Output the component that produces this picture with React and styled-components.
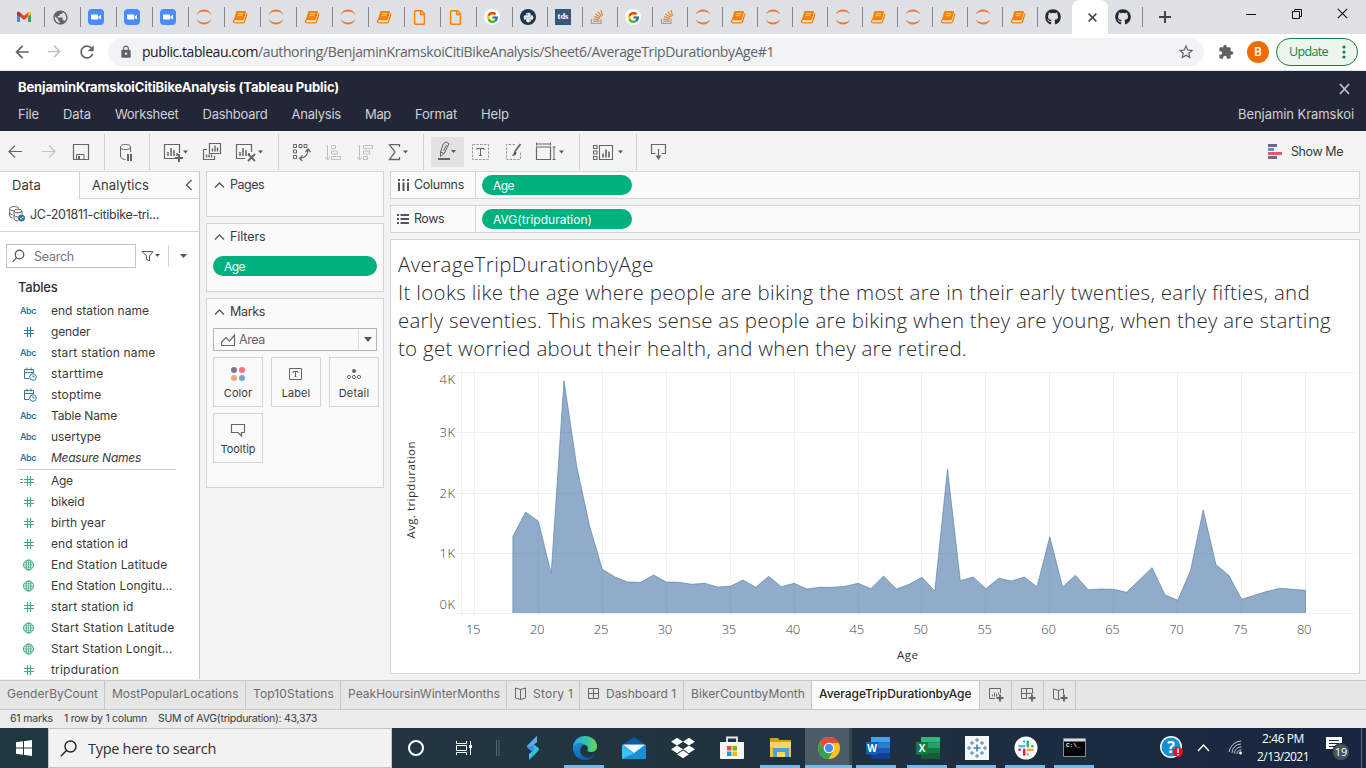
import React, { useLayoutEffect, useRef, useState } from "react";
import styled, { createGlobalStyle, css } from "styled-components";
import { FcGoogle } from "react-icons/fc";
import { FaGithub, FaPython, FaRegFile, FaDropbox } from "react-icons/fa";
import { MdPublic, MdArrowBack, MdArrowForward, MdRefresh, MdLock, MdStarBorder, MdExtension } from "react-icons/md";

const UI = `Inter, "Liberation Sans", sans-serif`;
const SYS = `"Open Sans", "Noto Sans", sans-serif`;

const GlobalStyle = createGlobalStyle`
  * { box-sizing: border-box; }
  body { margin: 0; overflow: hidden; background: #f3f3f3; font-family: ${UI}; color: #3a3a3a; }
  svg { display: block; flex: none; }
`;

const Screen = styled.div`
  width: 1366px;
  height: 768px;
  display: flex;
  flex-direction: column;
  overflow: hidden;
`;

/* ---------- text that tracks itself to a given width ---------- */
const Label = styled.span`
  display: inline-block;
  white-space: pre;
  flex: none;
`;
function Fit({ w, children }) {
  const ref = useRef(null);
  const [tracking, setTracking] = useState(0);
  useLayoutEffect(() => {
    const natural = ref.current.getBoundingClientRect().width;
    setTracking((w - natural) / children.length);
  }, [w, children]);
  return (
    <Label ref={ref} style={{ letterSpacing: tracking }}>
      {children}
    </Label>
  );
}

/* ---------- browser chrome ---------- */
const TabStrip = styled.div`
  height: 34px;
  flex: none;
  background: #dee1e6;
  display: flex;
  padding-left: 9px;
`;
const BrowserTab = styled.div`
  width: ${(p) => p.$w}px;
  height: 34px;
  flex: none;
  display: flex;
  align-items: center;
  padding-left: 7px;
  background: ${(p) => (p.$line ? "linear-gradient(#85888d, #85888d) right 7px / 1px 20px no-repeat" : "none")};
`;
const ActiveTab = styled.div`
  width: 36px;
  margin: 0 0 0 -1px;
  flex: none;
  height: 34px;
  background: #fff;
  border-radius: 8px 8px 0 0;
  display: flex;
  align-items: center;
  justify-content: center;
  padding-left: 4px;
`;
const WindowButtons = styled.div`
  display: flex;
  align-items: flex-start;
  margin-left: 66px;
  padding-top: 8px;
  gap: 34px;
`;
const Tile = styled.div`
  width: 16px;
  height: 16px;
  background: #355876;
  color: #fff;
  font: bold 8.5px/14px "Liberation Serif", serif;
  text-align: center;
`;
const GoogleDisc = styled.div`
  width: 16px;
  height: 16px;
  border-radius: 50%;
  background: #fff;
  display: grid;
  place-items: center;
`;
const PythonDisc = styled(GoogleDisc)`
  background: #1c3448;
  color: #e8eef2;
`;
const NavBar = styled.div`
  height: 37px;
  flex: none;
  background: #fff;
  border-bottom: 1px solid #dfe3e2;
  display: flex;
  align-items: center;
  color: #5f6368;
  font-family: ${SYS};
`;
const NavIcons = styled.div`
  display: flex;
  gap: 13px;
  width: 108px;
  padding-left: 12px;
`;
const Address = styled.div`
  width: 1096px;
  height: 28px;
  margin-right: 14px;
  border-radius: 14px;
  background: #f1f3f4;
  display: flex;
  align-items: center;
  padding: 0 9px 1px 11px;
  font-size: 14px;
  color: #5f6368;
  & > svg:first-child { margin-right: 9px; }
  & > svg:last-child { margin-left: auto; }
`;
const Host = styled.span`
  color: #202124;
  display: flex;
`;
const Avatar = styled.div`
  width: 22px;
  height: 22px;
  border-radius: 50%;
  background: #ef6c00;
  color: #fff;
  font: 500 12px/22px Roboto, sans-serif;
  text-align: center;
  margin: 0 7px 0 13px;
`;
const UpdateButton = styled.div`
  width: 82px;
  height: 28px;
  border: 1px solid #188038;
  border-radius: 14px;
  background: #edf5ef;
  color: #188038;
  font-size: 12.5px;
  display: flex;
  align-items: center;
  justify-content: space-between;
  padding: 0 11px 1px 12px;
`;

/* ---------- Tableau header ---------- */
const Header = styled.header`
  height: 60px;
  flex: none;
  background: #232637;
  color: #d0d1d6;
  padding: 7px 12px 0 18px;
`;
const HeaderRow = styled.div`
  display: flex;
  justify-content: space-between;
  align-items: center;
  height: ${(p) => p.$h}px;
`;
const CloseIcon = styled.svg`
  margin-top: 2px;
`;
const DocTitle = styled.div`
  color: #fff;
  font-weight: 700;
  font-size: 13px;
`;
const Menu = styled.nav`
  display: flex;
  gap: 24px;
  font-size: 13px;
`;
const Toolbar = styled.div`
  height: 40px;
  flex: none;
  background: #f4f4f4;
  display: flex;
  padding-top: 3px;
`;
const ToolGroup = styled.div`
  width: ${(p) => p.$w}px;
  height: 36px;
  flex: none;
  display: flex;
  align-items: center;
  gap: ${(p) => p.$gap ?? 8}px;
  padding-left: ${(p) => p.$pl}px;
  border-right: 1px solid ${(p) => (p.$last ? "transparent" : "#d1d1d1")};
`;
const ActiveTool = styled.div`
  width: 33px;
  height: 30px;
  background: #e2e2e2;
  display: flex;
  align-items: center;
`;
const ShowMe = styled.div`
  margin-left: auto;
  display: flex;
  align-items: center;
  gap: 8px;
  padding: 0 23px 2px 0;
  font-size: 12.5px;
`;

/* ---------- workspace ---------- */
const Workspace = styled.main`
  height: 509px;
  flex: none;
  display: flex;
  background: #f3f3f3;
`;
const DataPane = styled.aside`
  width: 200px;
  height: 508px;
  flex: none;
  background: #fff;
  border-right: 1px solid #c8c8c8;
  overflow: hidden;
`;
const PaneTabs = styled.div`
  height: 28px;
  display: flex;
  border-top: 1px solid #d4d4d4;
  font-size: 13px;
`;
const PaneTab = styled.div`
  width: ${(p) => p.$w}px;
  padding: 0 0 1px 12px;
  display: flex;
  align-items: center;
  justify-content: space-between;
  ${(p) =>
    p.$idle &&
    css`
      background: #fafafa;
      border-left: 1px solid #d4d4d4;
      border-bottom: 1px solid #d4d4d4;
      padding: 0 6px 0 12px;
    `}
`;
const Source = styled.div`
  height: 33px;
  border-bottom: 1px solid #d4d4d4;
  display: flex;
  align-items: center;
  gap: 4px;
  padding: 0 0 2px 9px;
  font-size: 12.5px;
`;
const SearchRow = styled.div`
  display: flex;
  align-items: center;
  height: 24px;
  margin: 12px 0 0 6px;
`;
const SearchBox = styled.div`
  width: 130px;
  height: 24px;
  border: 1px solid #c4c4c4;
  display: flex;
  align-items: center;
  gap: 9px;
  padding-left: 5px;
  color: #757575;
  font-size: 12.5px;
`;
const SearchDivider = styled.div`
  width: 1px;
  height: 22px;
  background: #d4d4d4;
  margin: 0 11px 0 8px;
`;
const TablesTitle = styled.div`
  margin: 9px 0 2px 18px;
  font-size: 13px;
  font-weight: 500;
  line-height: 21px;
  color: #303030;
`;
const Field = styled.div`
  height: 21px;
  display: flex;
  align-items: center;
  font-size: 12px;
  font-style: ${(p) => (p.$italic ? "italic" : "normal")};
`;
const FieldKind = styled.div`
  width: 51px;
  padding-left: 20px;
  flex: none;
  color: ${(p) => (p.$measure ? "#4aa583" : "#34799a")};
  font: 600 9px/21px ${UI};
  display: flex;
  align-items: center;
  height: 21px;
`;
const FieldRule = styled.div`
  height: 1px;
  width: 158px;
  margin: 1px 0 0 18px;
  background: #cfcfcf;
`;

const Cards = styled.section`
  width: 178px;
  margin-left: 6px;
  flex: none;
  display: flex;
  flex-direction: column;
  gap: 6px;
`;
const Card = styled.div`
  height: ${(p) => p.$h}px;
  background: #fafafa;
  border: 1px solid #d4d4d4;
  padding: 0 6px;
`;
const CardTitle = styled.div`
  height: 26px;
  display: flex;
  align-items: center;
  gap: 5px;
  padding: 0 0 1px 1px;
  font-size: 12.5px;
`;
const Pill = styled.div`
  width: ${(p) => p.$w}px;
  height: 20px;
  border-radius: 10px;
  background: #00b180;
  color: #fff;
  font-size: 12px;
  line-height: 21px;
  padding-left: 11px;
  margin-top: ${(p) => p.$mt ?? 0}px;
`;
const MarkSelect = styled.div`
  height: 23px;
  margin-top: 3px;
  border: 1px solid #b4b4b4;
  display: flex;
  align-items: center;
  padding-left: 7px;
  gap: 3px;
  font-size: 12.5px;
  color: #666;
  background: #fafafa;
`;
const SelectArrow = styled.div`
  width: 18px;
  height: 21px;
  margin-left: auto;
  border-left: 1px solid #ddd;
  display: grid;
  place-items: center;
`;
const MarkGrid = styled.div`
  display: grid;
  grid-template-columns: repeat(3, 50px);
  grid-auto-rows: 50px;
  gap: 6px 8px;
  margin-top: 6px;
`;
const MarkButton = styled.div`
  border: 1px solid #d4d4d4;
  background: #fafafa;
  display: flex;
  flex-direction: column;
  align-items: center;
  padding-top: 8px;
  font-size: 11px;
  line-height: 21px;
`;

const Sheet = styled.section`
  width: 970px;
  margin-left: 6px;
  flex: none;
  display: flex;
  flex-direction: column;
  gap: 6px;
`;
const Shelf = styled.div`
  height: 28px;
  background: #fafafa;
  border: 1px solid #d4d4d4;
  display: flex;
  align-items: center;
`;
const ShelfName = styled.div`
  width: 85px;
  height: 26px;
  border-right: 1px solid #d4d4d4;
  margin-right: 6px;
  padding: 0 0 1px 6px;
  display: flex;
  align-items: center;
  gap: 4px;
  font-size: 12.5px;
`;
const View = styled.div`
  height: 435px;
  background: #fff;
  border: 1px solid #d4d4d4;
`;
const ViewTitle = styled.div`
  height: 124px;
  padding: 10px 0 0 7px;
  font: 300 20.500px/28px ${SYS};
  color: #2c2c2c;
  display: flex;
  flex-direction: column;
  align-items: flex-start;
`;

/* ---------- sheet tabs and status ---------- */
const SheetTabs = styled.div`
  height: 30px;
  flex: none;
  background: #e6e6e6;
  border-top: 1px solid #c8c8c8;
  border-bottom: 1px solid #c8c8c8;
  display: flex;
`;
const SheetTab = styled.div`
  width: ${(p) => p.$w}px;
  flex: none;
  border-right: 1px solid #c8c8c8;
  padding: 0 0 ${(p) => (p.$add ? 1 : 3)}px ${(p) => (p.$add ? 8 : 7)}px;
  display: flex;
  align-items: center;
  gap: 5px;
  font-size: 12px;
  color: ${(p) => (p.$active ? "#262626" : "#6c6c6c")};
  font-weight: ${(p) => (p.$active ? 500 : 400)};
  background: ${(p) => (p.$active ? "#fafafa" : "none")};
`;
const Status = styled.div`
  height: 18px;
  flex: none;
  background: #ebebeb;
  display: flex;
  gap: 11px;
  padding-left: 10px;
  font-size: 10.5px;
  line-height: 18px;
`;

/* ---------- taskbar ---------- */
const Taskbar = styled.footer`
  height: 40px;
  flex: none;
  background: linear-gradient(90deg, #203740 0%, #21353f 45%, #1c2d41 75%, #182640 100%);
  display: flex;
  color: #fff;
  font-family: ${SYS};
`;
const Start = styled.div`
  width: 48px;
  display: grid;
  place-items: center;
`;
const TaskSearch = styled.div`
  width: 344px;
  height: 40px;
  background: #f2f2f2;
  border: 1px solid #c6c6c6;
  color: #303030;
  display: flex;
  align-items: center;
  gap: 11px;
  padding-left: 11px;
  font-size: 14.5px;
`;
const TaskItem = styled.div`
  width: ${(p) => p.$w ?? 49}px;
  height: 40px;
  flex: none;
  display: flex;
  align-items: center;
  justify-content: center;
  border-bottom: 3px solid transparent;
  border-top: 3px solid transparent;
  ${(p) =>
    p.$open &&
    css`
      background: linear-gradient(#76b9ed, #76b9ed) ${p.$active ? "0" : "4px"} 100% /
        ${p.$active ? "47px" : "40px"} 3px no-repeat border-box,
        ${p.$active ? "linear-gradient(90deg, #4b5c66 44px, #34464f 44px) border-box" : "none"};
    `}
`;
const Tray = styled.div`
  margin-left: auto;
  display: flex;
  align-items: center;
`;
const Clock = styled.div`
  width: 60px;
  margin-right: 8px;
  font-size: 12px;
  line-height: 18px;
  display: flex;
  flex-direction: column;
  align-items: center;
`;
const PeekEdge = styled.div`
  width: 5px;
  height: 40px;
  margin-left: 6px;
  border-left: 1px solid #5c6878;
`;

/* ---------- favicons ---------- */
const Gmail = () => (
  <svg width="16" height="16" viewBox="0 0 16 16">
    <path d="M1 4.2V13h3V7.6L1 5z" fill="#4285f4" />
    <path d="M12 7.6V13h3V4.2z" fill="#34a853" />
    <path d="M12 4.2v3.6l3-2.3V4.4c0-1.8-1.7-2-2.6-1.2z" fill="#fbbc04" />
    <path d="M4 7.8 8 10.9 12 7.8V3.6L8 6.7 4 3.6z" fill="#ea4335" />
    <path d="M1 4.4v1.1l3 2.3V3.6l-.5-.4C2.5 2.5 1 2.8 1 4.4z" fill="#c5221f" />
  </svg>
);
const Zoom = () => (
  <svg width="16" height="16" viewBox="0 0 16 16">
    <rect width="16" height="16" rx="4" fill="#4a8cff" />
    <path d="M3 5.5h6.2q1 0 1 1v4H4q-1 0-1-1zM10.800 7.3 13 5.7v4.8l-2.2-1.6z" fill="#fff" />
  </svg>
);
const Jupyter = () => (
  <svg width="16" height="16" viewBox="0 0 16 16" fill="#f37726">
    <path d="M.6 5.6C2 2.2 5 .6 8 .6s6 1.6 7.4 5C13.5 3.6 11 2.6 8 2.6S2.5 3.6.6 5.6z" />
    <path d="M.6 10.4c1.4 3.4 4.4 5 7.4 5s6-1.6 7.4-5c-1.9 2-4.400 3-7.4 3s-5.500-1-7.4-3z" />
  </svg>
);
const Notebook = () => (
  <svg width="16" height="16" viewBox="0 0 16 16">
    <path d="M5.200 2h7.800q1.200 0 .9 1.200L11.900 10.300q-.3.900-1.300.9H1.900L4 3q.3-1 1.200-1z" fill="#f98000" />
    <path d="M1.700 11q-.9 2.800 1.300 2.800h8q1.200 0 1.500-1L15 4.600" fill="none" stroke="#f98000" strokeWidth="1.300" />
    <path d="M6.300 4.700h5M5.700 6.700h5" stroke="#fde0bd" strokeWidth=".9" />
  </svg>
);
const StackOverflow = () => (
  <svg width="16" height="16" viewBox="0 0 16 16" fill="none">
    <path d="M1.500 10v4.500h9.500V10" stroke="#999fa5" strokeWidth="1.200" />
    <path d="M3.200 12.400h6.200M3.300 10.100l6.100.7M4 7.600l5.900 1.800M5.400 5l5.200 3.200M7.800 2.600l3.900 4.700M10.900 1l1.700 5.600" stroke="#f48024" strokeWidth="1.100" />
  </svg>
);
const GoogleIcon = () => (
  <GoogleDisc>
    <FcGoogle size={13} />
  </GoogleDisc>
);
const favicons = {
  gmail: <Gmail />,
  globe: <MdPublic size={17} color="#5f6368" />,
  zoom: <Zoom />,
  jup: <Jupyter />,
  book: <Notebook />,
  page: <FaRegFile size={15} color="#f98000" />,
  google: <GoogleIcon />,
  python: (
    <PythonDisc>
      <FaPython size={11} />
    </PythonDisc>
  ),
  tds: <Tile>tds</Tile>,
  so: <StackOverflow />,
  git: <FaGithub size={16} color="#24292e" />,
};
const wideTabs = ["gmail", "globe", "zoom", "zoom", "zoom", "jup", "book", "jup", "book", "jup", "book", "page", "page", "google"];
const narrowTabs = ["python", "tds", "so", "google", "so", "jup", "book", "jup", "book", "jup", "book", "jup", "book", "jup", "book"];

const Cross = ({ size = 10, color = "#444", width = 1.6 }) => (
  <svg width={size} height={size} viewBox="0 0 10 10">
    <path d="M.7.7 9.3 9.3M9.3.7.7 9.3" stroke={color} strokeWidth={width} />
  </svg>
);

/* ---------- toolbar drawings ---------- */
const Draw = ({ w = 24, h = 24, children, color = "#666" }) => (
  <svg width={w} height={h} viewBox={`0 0 ${w} ${h}`} fill="none" stroke={color} strokeWidth="1">
    {children}
  </svg>
);
const Caret = ({ x, y = 10.5 }) => <path d={`M${x} ${y}h5l-2.5 3z`} fill="#555" stroke="none" />;
const Bars = ({ x, y }) => <path d={`M${x} ${y}v-4M${x + 3} ${y}v-8M${x + 6} ${y}v-6M${x + 9} ${y}v-3`} strokeWidth="1.5" />;
const Down = () => (
  <svg width="8" height="5" viewBox="0 0 8 5">
    <path d="M0 0h8L4 5z" fill="#555" />
  </svg>
);

function Tools() {
  return (
    <Toolbar>
      <ToolGroup $w={105} $pl={4}>
        <Draw><path d="M18 11.500H5.500M11 5.500l-6 6 6 6" strokeWidth="1.200" /></Draw>
        <Draw color="#c4c4c4"><path d="M6 11.500h12.500M13 5.500l6 6-6 6" strokeWidth="1.200" /></Draw>
        <Draw w={26}>
          <path d="M5.500 4.500h15v15h-15z" strokeWidth="1.200" />
          <path d="M8.500 19.500v-5h7.500v5" />
          <path d="M10 16h2v3.500h-2z" fill="#666" stroke="none" />
        </Draw>
      </ToolGroup>
      <ToolGroup $w={45} $pl={11}>
        <Draw>
          <ellipse cx="9.500" cy="7" rx="5" ry="2.500" />
          <path d="M4.500 7v10q1 2.500 5 2.500M14.500 7v5" />
          <path d="M12 14v7M15 14v7" strokeWidth="2" />
        </Draw>
      </ToolGroup>
      <ToolGroup $w={129} $pl={10} $gap={7}>
        <Draw w={32}>
          <path d="M19.500 13V4.500h-15v14H15" strokeWidth="1.200" />
          <Bars x={8} y={16} />
          <path d="M19 14v8M15 18h8" strokeWidth="2" />
          <Caret x={23} />
        </Draw>
        <Draw>
          <path d="M10.500 3.500h11v10h-11z" strokeWidth="1.200" />
          <path d="M13.500 11.500v-3M16 11.500v-6M18.500 11.500v-4" strokeWidth="1.400" />
          <path d="M8 9.500H4.500v10h11V16" strokeWidth="1.200" />
          <path d="M7.500 17.500v-3M10 17.500v-3M12.500 17.500v-3" strokeWidth="1.400" />
        </Draw>
        <Draw w={34}>
          <path d="M21.500 12V4.500h-15v14H15" strokeWidth="1.200" />
          <Bars x={10} y={16} />
          <path d="m18 14 7 7m0-7-7 7" strokeWidth="1.800" />
          <Caret x={28} />
        </Draw>
      </ToolGroup>
      <ToolGroup $w={145} $pl={10}>
        <Draw>
          <path d="M4.500 4.500h3v3h-3zM10 4.500h3v3h-3zM15 4.500h3v3h-3zM4.500 10h3v3h-3zM4.500 15.500h3v3h-3z" />
          <path d="M19 9.500q0 8-8 9M16.500 12l2.500-3 2.500 3M13.500 15.500l-3 3 3 2.500" strokeWidth="1.200" />
        </Draw>
        <Draw color="#c0c0c0">
          <path d="M6.500 5v15M4 17l2.500 3L9 17M10.500 5.500h4v3h-4zM10.500 11h6v3h-6zM10.500 16.500h9v3h-9z" />
        </Draw>
        <Draw color="#c0c0c0">
          <path d="M6.500 5v15M4 17l2.500 3L9 17M10.500 5.500h9v3h-9zM10.500 11h6v3h-6zM10.500 16.500h4v3h-4z" />
        </Draw>
        <Draw w={28}>
          <path d="M14.500 7V4.700H4.500l5.500 7.300-5.500 7.500h10V17" strokeWidth="1.300" />
          <Caret x={18} />
        </Draw>
      </ToolGroup>
      <ToolGroup $w={156} $pl={7} $gap={4}>
        <ActiveTool>
          <Draw w={33} h={30}>
            <path d="M12.500 6.500 15 5l3 1.600L13.500 16l-4 3.500V15zM9.500 15l4 1.500M15.500 8l-3 6" />
            <path d="M7 22h12" strokeWidth="2" />
            <Caret x={20} y={13} />
          </Draw>
        </ActiveTool>
        <Draw>
          <path d="M4.500 4.500h16v15h-16z" strokeDasharray="2.500 1.300" stroke="#999" />
          <path d="M9 10V8.500h7V10M12.500 8.500v7M11 15.500h3" />
        </Draw>
        <Draw w={28}>
          <path d="M19 4.500h-8.500v15h14V12" strokeDasharray="2.500 1.300" stroke="#999" />
          <path d="M24.500 4 19 11.500" strokeWidth="1.800" />
          <path d="M18.500 11l2 1.500q-.5 3.500-4.500 3.500 1.500-1 2.500-5z" fill="#555" stroke="none" />
        </Draw>
        <Draw w={40}>
          <path d="M8.500 7h14v12.500h-14z" strokeWidth="1.200" />
          <path d="M8.500 2.500v3M22.500 2.500v3M8.500 4h14M24.500 7h3M24.500 19.500h3M26 7v12.500" />
          <Caret x={31} />
        </Draw>
      </ToolGroup>
      <ToolGroup $w={57} $pl={9}>
        <Draw w={36}>
          <path d="M4.500 5.500H8v3H4.500zM4.500 11H8v3H4.500zM4.500 16.500H8v3H4.500zM10.500 5.500h13v14h-13z" strokeWidth="1.100" />
          <path d="M14 17.500v-4M17 17.500v-8M20 17.500v-6" strokeWidth="1.700" />
          <Caret x={29} />
        </Draw>
      </ToolGroup>
      <ToolGroup $w={200} $pl={10} $last>
        <Draw>
          <path d="M8.500 13.500h-4v-9h14v9h-4M11.500 9v8" strokeWidth="1.200" />
          <path d="M8.500 15.500h6l-3 4.500z" fill="#666" stroke="none" />
        </Draw>
      </ToolGroup>
      <ShowMe>
        <svg width="15" height="16" viewBox="0 0 15 16">
          <path d="M0 0h9v3H0z" fill="#6a6590" />
          <path d="M0 4h6v3H0z" fill="#5e93b9" />
          <path d="M0 8h14v3H0z" fill="#e6576a" />
          <path d="M0 12h9v3H0z" fill="#7b6888" />
        </svg>
        <Fit w={52}>Show Me</Fit>
      </ShowMe>
    </Toolbar>
  );
}

/* ---------- data pane ---------- */
const Hash = ({ calc }) => (
  <svg width="18" height="12" viewBox="0 0 18 12" fill="none" stroke="currentColor">
    <path d="M4 4.500h10M4 7.500h10M7.500 1v10M10.500 1v10" strokeWidth="1.200" />
    {calc && <path d="M0 4.500h3M0 7.500h3" />}
  </svg>
);
const DateTime = () => (
  <svg width="18" height="14" viewBox="0 0 18 14" fill="none" stroke="currentColor">
    <path d="M9 11.500H4.500v-9h9V6M4.500 5.500h9M7 .5v3M11 .5v3" />
    <circle cx="13" cy="10" r="3.300" />
    <path d="M13 8.200V10h1.500" />
  </svg>
);
const Geo = () => (
  <svg width="18" height="12" viewBox="0 0 18 12" fill="none" stroke="currentColor" strokeWidth="1">
    <circle cx="8.500" cy="6" r="5" />
    <ellipse cx="8.500" cy="6" rx="2.300" ry="5" />
    <path d="M4 3.700h9M4 8.300h9M8.500 1v10M3.500 6h10" strokeWidth=".7" />
  </svg>
);
const kinds = { abc: <Fit w={16}>Abc</Fit>, hash: <Hash />, calc: <Hash calc />, date: <DateTime />, geo: <Geo /> };
const dimensions = [
  ["abc", "end station name", 98],
  ["hash", "gender", 39.5],
  ["abc", "start station name", 104.5],
  ["date", "starttime", 52.5],
  ["date", "stoptime", 50.5],
  ["abc", "Table Name", 66],
  ["abc", "usertype", 50],
  ["abc", "Measure Names", 90],
];
const measures = [
  ["calc", "Age", 21.5],
  ["hash", "bikeid", 33.5],
  ["hash", "birth year", 54.5],
  ["hash", "end station id", 77],
  ["geo", "End Station Latitude", 116.5],
  ["geo", "End Station Longitu...", 121.5],
  ["hash", "start station id", 82.5],
  ["geo", "Start Station Latitude", 123.5],
  ["geo", "Start Station Longit...", 121.5],
  ["hash", "tripduration", 68],
];
const FieldRow = ({ field: [kind, name, w], measure }) => (
  <Field $italic={name === "Measure Names"}>
    <FieldKind $measure={measure}>{kinds[kind]}</FieldKind>
    <Fit w={w}>{name}</Fit>
  </Field>
);

function DataPanel() {
  return (
    <DataPane>
      <PaneTabs>
        <PaneTab $w={79}><Fit w={29}>Data</Fit></PaneTab>
        <PaneTab $w={120} $idle>
          <Fit w={57}>Analytics</Fit>
          <svg width="8" height="12" viewBox="0 0 8 12"><path d="M6.500 1 1.500 6l5 5" fill="none" stroke="#555" strokeWidth="1.300" /></svg>
        </PaneTab>
      </PaneTabs>
      <Source>
        <svg width="17" height="18" viewBox="0 0 17 18" fill="none" stroke="#666">
          <path d="M3.500 13Q1 13 .7 11V3.500Q1 1.500 5 1.500t5 1.800M.7 4q.5 1.800 4 1.800M.7 8q.5 1.800 3 1.800" />
          <ellipse cx="9" cy="6" rx="4" ry="1.800" />
          <path d="M5 6v8q.5 2 4 2M13 6v3M5 10q1 2 4 2" />
          <circle cx="12.500" cy="13" r="3.500" fill="#2d7aa3" stroke="none" />
          <path d="m10.900 13 1.200 1.200 2.200-2.400" stroke="#fff" />
        </svg>
        <Fit w={129}>JC-201811-citibike-tri...</Fit>
      </Source>
      <SearchRow>
        <SearchBox>
          <svg width="13" height="14" viewBox="0 0 13 14" fill="none" stroke="#555" strokeWidth="1.200"><circle cx="7.500" cy="5.500" r="4.300" /><path d="M4.500 8.700.6 12.800" /></svg>
          <Fit w={40}>Search</Fit>
        </SearchBox>
        <svg width="19" height="14" viewBox="0 0 19 14">
          <path d="M6 2.500h11L13.500 7v5l-3-1.700V7z" fill="none" stroke="#555" />
        </svg>
        <svg width="5" height="4" viewBox="0 0 5 4"><path d="M0 0h5L2.500 3z" fill="#555" /></svg>
        <SearchDivider />
        <svg width="7" height="5" viewBox="0 0 7 5"><path d="M0 0h7L3.500 4z" fill="#555" /></svg>
      </SearchRow>
      <TablesTitle><Fit w={39.5}>Tables</Fit></TablesTitle>
      {dimensions.map((f) => <FieldRow key={f[1]} field={f} />)}
      <FieldRule />
      {measures.map((f) => <FieldRow key={f[1]} field={f} measure />)}
    </DataPane>
  );
}

/* ---------- cards ---------- */
const Chevron = () => (
  <svg width="11" height="8" viewBox="0 0 11 8"><path d="M1 6.500 5.500 2 10 6.500" fill="none" stroke="#555" strokeWidth="1.300" /></svg>
);
function CardColumn() {
  return (
    <Cards>
      <Card $h={46}><CardTitle><Chevron /><Fit w={34}>Pages</Fit></CardTitle></Card>
      <Card $h={69}>
        <CardTitle><Chevron /><Fit w={35.5}>Filters</Fit></CardTitle>
        <Pill $w={164} $mt={6}><Fit w={21}>Age</Fit></Pill>
      </Card>
      <Card $h={190}>
        <CardTitle><Chevron /><Fit w={35}>Marks</Fit></CardTitle>
        <MarkSelect>
          <svg width="15" height="14" viewBox="0 0 15 14"><path d="M.7 12.500V9L5 4.500l3.500 3.700L13.500 2v10.500z" fill="none" stroke="#666" strokeWidth="1.200" /></svg>
          <Fit w={26}>Area</Fit>
          <SelectArrow><Down /></SelectArrow>
        </MarkSelect>
        <MarkGrid>
          <MarkButton>
            <svg width="16" height="17" viewBox="0 0 16 17">
              <circle cx="4" cy="4" r="3" fill="#856f97" /><circle cx="12" cy="4" r="3" fill="#f9707f" />
              <circle cx="4" cy="12" r="3" fill="#f4a57c" /><circle cx="12" cy="12" r="3" fill="#7ca5cb" />
            </svg>
            <Fit w={28.5}>Color</Fit>
          </MarkButton>
          <MarkButton>
            <svg width="16" height="17" viewBox="0 0 16 17" fill="none" stroke="#666"><path d="M1.500 2.500h12v11h-12zM5 7V5.500h5V7M7.500 5.500v5M6.500 10.500h2" /></svg>
            <Fit w={28.5}>Label</Fit>
          </MarkButton>
          <MarkButton>
            <svg width="16" height="17" viewBox="0 0 16 17"><circle cx="8" cy="5" r="2" fill="#666" /><g fill="none" stroke="#666"><circle cx="3" cy="11" r="1.600" /><circle cx="8" cy="11" r="1.600" /><circle cx="13" cy="11" r="1.600" /></g></svg>
            <Fit w={30.5}>Detail</Fit>
          </MarkButton>
          <MarkButton>
            <svg width="16" height="17" viewBox="0 0 16 17"><path d="M1.500 2.500h13v8h-3v3.500L8 10.500H1.500z" fill="none" stroke="#666" strokeWidth="1.200" /></svg>
            <Fit w={35}>Tooltip</Fit>
          </MarkButton>
        </MarkGrid>
      </Card>
    </Cards>
  );
}

/* ---------- chart ---------- */
const firstAge = 18;
const durations = [
  1274, 1678, 1523, 656, 3859, 2430, 1445, 726, 598, 515, 510, 631, 515, 510, 477, 493, 432, 443, 548, 427, 610,
  437, 493, 399, 427, 427, 443, 493, 404, 615, 399, 477, 593, 365, 2387, 537, 598, 404, 576, 532, 598, 437, 1268,
  432, 626, 387, 399, 394, 344, 548, 753, 304, 211, 703, 1711, 802, 626, 228, 294, 360, 410, 394, 377,
];
const ageX = (age) => 83.5 + (age - 15) * 12.785;
const durY = (v) => 249 - v * 0.0602;
const AxisText = styled.text`
  font-family: ${SYS};
  font-size: 13px;
  font-weight: 300;
  fill: #444;
`;
const AxisTitle = styled.text`
  font-family: ${SYS};
  font-size: 11.5px;
  fill: #333;
`;
function Chart() {
  const line = durations.map((v, i) => `${ageX(firstAge + i).toFixed(1)},${durY(v).toFixed(1)}`);
  const left = ageX(firstAge);
  const right = ageX(80);
  const ages = Array.from({ length: 14 }, (_, i) => 15 + i * 5);
  return (
    <svg width="966" height="309" viewBox="0 0 966 309">
      <g stroke="#f0f0f0" shapeRendering="crispEdges">
        {[8.5, 68.5, 129.5, 189.5, 249.5].map((y) => <path key={y} d={`M65 ${y}H965`} />)}
        <path d="M70.500 6v247" />
        {ages.map((a) => <path key={a} d={`M${Math.floor(ageX(a)) + 0.5} 6v247`} />)}
      </g>
      <path d={`M${left},249 L${line.join(" ")} L${right},249z`} fill="#4e79a7" fillOpacity=".62" />
      <path d={`M${left},249 L${line.join(" ")} V249`} fill="none" stroke="#4e79a7" strokeOpacity=".6" />
      {[["4K", 20], ["3K", 73], ["2K", 134], ["1K", 194], ["0K", 245]].map(([t, y]) => (
        <AxisText key={t} x="48.500" y={y} textLength="15.500">{t}</AxisText>
      ))}
      {ages.map((a) => <AxisText key={a} x={ageX(a) - 8.5} y="270" textLength="14.500">{a}</AxisText>)}
      <AxisTitle x="506" y="295" textLength="21">Age</AxisTitle>
      <AxisTitle transform="translate(24 174.500) rotate(-90)" textLength="97">Avg. tripduration</AxisTitle>
    </svg>
  );
}

/* ---------- sheet tab icons ---------- */
const Book = ({ add }) => (
  <svg width={add ? 16 : 14} height="15" viewBox={`0 0 ${add ? 16 : 14} 15`} fill="none" stroke="#666">
    <path d={add ? "M8 11.500 6.500 13 1.500 11.500V2L6.500 3.500 11.500 2V7M6.500 3.500v9" : "M1.500 2 6.500 3.500 11.500 2v10L6.500 13.500 1.500 12zM6.500 3.500v10"} />
    {add && <path d="M12 7.500v7M8.500 11h7" strokeWidth="2" />}
  </svg>
);
const GridIcon = ({ add }) => (
  <svg width={add ? 16 : 14} height="15" viewBox={`0 0 ${add ? 16 : 14} 15`} fill="none" stroke="#666">
    <path d={add ? "M7 11.500H1.500v-10h11V6M6.500 1.500v10M1.500 6.500h11" : "M1.500 2.500h10v10h-10zM6.500 2.500v10M1.500 7.500h10"} />
    {add && <path d="M12 7.500v7M8.500 11h7" strokeWidth="2" />}
  </svg>
);
const SheetAdd = () => (
  <svg width="16" height="15" viewBox="0 0 16 15" fill="none" stroke="#666">
    <path d="M7 11.500H1.500v-10h11V6M4.500 9.500v-2M6.500 9.500v-4M8.500 9.500v-3M10.500 7.500v-2" />
    <path d="M12 7.500v7M8.500 11h7" strokeWidth="2" />
  </svg>
);

/* ---------- taskbar icons ---------- */
const Spark = () => (
  <svg width="24" height="26" viewBox="0 0 24 26">
    <path d="M16 1 6.500 10.500q-1 1.500 0 2.500L14 19l-1.500-5.500L11 11l5-4z" fill="#4a86ee" />
    <path d="M16 1v6l-5 4-4.500 1q-1-.5 0-1.500z" fill="#57b2f6" />
    <path d="M8 25l9.500-9.500q1-1.500 0-2.500L13 9.500l-1.500 1.500 1.500 4-5 4z" fill="#2fc4f0" />
  </svg>
);
const Edge = () => (
  <svg width="26" height="26" viewBox="0 0 26 26">
    <defs>
      <linearGradient id="edgeTop" x1="0" x2="1"><stop stopColor="#25a8e0" /><stop offset=".6" stopColor="#35c6a8" /><stop offset="1" stopColor="#68dc4f" /></linearGradient>
      <linearGradient id="edgeLow" x1="0" x2="1" y1="0" y2="1"><stop stopColor="#1b8fdd" /><stop offset="1" stopColor="#0b4f9e" /></linearGradient>
    </defs>
    <path d="M1 13C1 5.500 6.500 1 13 1s12 4.500 12 10.500c0 4-3 5.500-6 5.500-2.500 0-4-1-3.500-2 1.500-3-1-5.500-4.500-5.500C6 9.500 2 11.500 1 16z" fill="url(#edgeTop)" />
    <path d="M1 13c1.500-5 8-6.500 11-3-4 1-5 6-2.500 9.500 2.500 3.500 8.500 4.500 13.500 0C20.500 23.500 17 25 13 25 6 25 1 19.500 1 13z" fill="url(#edgeLow)" />
  </svg>
);
const MailIcon = () => (
  <svg width="26" height="24" viewBox="0 0 26 24">
    <path d="M1 9 13 1l12 8z" fill="#0c59a4" />
    <path d="M1 9h24v14H1z" fill="#25a4e6" />
    <path d="M2 8.500h22L13 17z" fill="#eef6fb" />
    <path d="M1 9l12 8.500L1 23z" fill="#3fc0f7" />
    <path d="M25 9 13 17.500 1 23h24z" fill="#178fd8" />
  </svg>
);
const Store = () => (
  <svg width="24" height="26" viewBox="0 0 24 26">
    <path d="M7 8V2.500h10V8" fill="none" stroke="#e8e8e8" strokeWidth="1.800" />
    <path d="M0 7h24v16q0 1-1 1H1q-1 0-1-1z" fill="#f7f7f7" />
    <path d="M7 11h4.500v4.500H7z" fill="#f25022" /><path d="M12.500 11H17v4.500h-4.500z" fill="#7fba00" />
    <path d="M7 16.500h4.500V21H7z" fill="#00a4ef" /><path d="M12.500 16.500H17V21h-4.500z" fill="#ffb900" />
  </svg>
);
const Explorer = () => (
  <svg width="24" height="22" viewBox="0 0 24 22">
    <path d="M1 1h8l1.500 2H22v8H1z" fill="#d89e20" /><path d="M1 5h21v14H1z" fill="#fcd468" />
    <path d="M4 11h16v9H4z" fill="#4a9fdc" /><path d="M8 20v-5h8v5z" fill="#fcd468" /><path d="M1 10h3v10H1zM20 10h2v10h-2z" fill="#f3c14b" />
  </svg>
);
const Chrome = () => (
  <svg width="24" height="24" viewBox="0 0 24 24">
    <circle cx="12" cy="12" r="11" fill="#fbc116" />
    <path d="M12 6.700h9.700q-1-2.500-3.500-4H6L2.800 6.500 7.500 14z" fill="#e24a3b" />
    <path d="M2.470 6.500A11 11 0 0 0 11.500 23l4.700-8-8.700-1z" fill="#2fa24f" />
    <path d="M2.470 6.500A11 11 0 0 1 21.700 6.700H12z" fill="#e24a3b" />
    <circle cx="12" cy="12" r="5.300" fill="#fff" /><circle cx="12" cy="12" r="4.200" fill="#4b8bf4" />
  </svg>
);
const OfficeText = styled.text`
  font: bold 10px ${SYS};
  fill: #fff;
  text-anchor: middle;
`;
const Office = ({ letter, colors }) => (
  <svg width="26" height="24" viewBox="0 0 26 24">
    <path d="M6 1h19v5.500H6z" fill={colors[0]} /><path d="M6 6.500h19V12H6z" fill={colors[1]} />
    <path d="M6 12h19v5.500H6z" fill={colors[2]} /><path d="M6 17.500h19V23H6z" fill={colors[3]} />
    <path d="M1 6h12v12.500H1z" fill={colors[4]} />
    <OfficeText x="7" y="16">{letter}</OfficeText>
  </svg>
);
const TableauIcon = () => (
  <svg width="24" height="24" viewBox="0 0 24 24" stroke="#4a81a8" strokeWidth="1.200">
    <path d="M0 0h24v24H0z" fill="#f5f8fb" stroke="none" />
    <path d="M12 8.500v7M8.500 12h7" strokeWidth="1.600" />
    <path d="M12 2v4M10 4h4M12 18v4M10 20h4M4 10v4M2 12h4M20 10v4M18 12h4M7 5v4M5 7h4M17 5v4M15 7h4M7 15v4M5 17h4M17 15v4M15 17h4" strokeWidth="1" />
  </svg>
);
const Slack = () => (
  <svg width="24" height="24" viewBox="0 0 24 24" strokeWidth="2.600" strokeLinecap="round">
    <circle cx="12" cy="12" r="11.500" fill="#fff" />
    <path d="M10.200 5.500v.3M5.500 10.200h4.700" stroke="#36c5f0" />
    <path d="M13.800 5.500v4.700M18.200 10.200h.3" stroke="#2eb67d" />
    <path d="M13.800 13.800h4.700M13.800 18.200v.3" stroke="#ecb22e" />
    <path d="M10.200 13.800v4.700M5.500 13.800h.3" stroke="#e01e5a" />
  </svg>
);
const TermText = styled.text`
  font: bold 6px "Liberation Mono", monospace;
  fill: #eee;
`;
const Terminal = () => (
  <svg width="24" height="20" viewBox="0 0 24 20">
    <path d="M.5.5h22v18H.5z" fill="#060606" stroke="#8a8f94" /><path d="M1 1h21v2.500H1z" fill="#d6dadd" />
    <TermText x="3" y="9">C:\_</TermText>
  </svg>
);
const HelpText = styled.text`
  font: bold 16px ${SYS};
  fill: #fff;
  text-anchor: middle;
`;
const BadgeText = styled.text`
  font: 11px ${SYS};
  fill: #fff;
  text-anchor: middle;
`;

const tabs = [
  ["GenderByCount", 105, 91],
  ["MostPopularLocations", 141, 126.5],
  ["Top10Stations", 95, 81],
  ["PeakHoursinWinterMonths", 166, 152],
  ["Story 1", 73, 40, <Book key="i" />],
  ["Dashboard 1", 104, 70, <GridIcon key="i" />],
  ["BikerCountbyMonth", 128, 114],
  ["AverageTripDurationbyAge", 168, 152.5],
];
const menu = [["File", 21], ["Data", 28], ["Worksheet", 63.5], ["Dashboard", 65], ["Analysis", 49.5], ["Map", 26], ["Format", 42], ["Help", 28]];

export default function App() {
  return (
    <Screen>
      <GlobalStyle />
      <TabStrip>
        {wideTabs.map((t, i) => <BrowserTab key={i} $w={36} $line>{favicons[t]}</BrowserTab>)}
        {narrowTabs.map((t, i) => <BrowserTab key={i} $w={35} $line>{favicons[t]}</BrowserTab>)}
        <BrowserTab $w={35}>{favicons.git}</BrowserTab>
        <ActiveTab><Cross size={9} /></ActiveTab>
        <BrowserTab $w={35} $line>{favicons.git}</BrowserTab>
        <BrowserTab $w={36}>
          <svg width="22" height="14" viewBox="0 0 22 14"><path d="M15 1v12M9 7h12" stroke="#444" strokeWidth="2" /></svg>
        </BrowserTab>
        <WindowButtons>
          <svg width="12" height="12"><path d="M1 6.500h10" stroke="#111" /></svg>
          <svg width="12" height="12" fill="none" stroke="#111"><path d="M1.500 3.500h7v7h-7zM3.500 3.500v-2h7v7h-2" /></svg>
          <Cross size={11} color="#111" width={1} />
        </WindowButtons>
      </TabStrip>
      <NavBar>
        <NavIcons>
          <MdArrowBack size={20} />
          <MdArrowForward size={19} color="#bdc1c6" />
          <MdRefresh size={20} />
        </NavIcons>
        <Address>
          <MdLock size={14} />
          <Host><Fit w={116}>public.tableau.com</Fit></Host>
          <Fit w={516}>/authoring/BenjaminKramskoiCitiBikeAnalysis/Sheet6/AverageTripDurationbyAge#1</Fit>
          <MdStarBorder size={18} />
        </Address>
        <MdExtension size={16} />
        <Avatar>B</Avatar>
        <UpdateButton>
          <Fit w={39}>Update</Fit>
          <svg width="4" height="14" fill="#188038"><circle cx="2" cy="2" r="1.600" /><circle cx="2" cy="7" r="1.600" /><circle cx="2" cy="12" r="1.600" /></svg>
        </UpdateButton>
      </NavBar>

      <Header>
        <HeaderRow $h={18}>
          <DocTitle><Fit w={321}>BenjaminKramskoiCitiBikeAnalysis (Tableau Public)</Fit></DocTitle>
          <CloseIcon width="16" height="14"><path d="m2 3 9 10M11 3 2 13" stroke="#c0c1c8" strokeWidth="1.800" /></CloseIcon>
        </HeaderRow>
        <HeaderRow $h={36}>
          <Menu>
            {menu.map(([t, w]) => <Fit key={t} w={w}>{t}</Fit>)}
          </Menu>
          <Menu><Fit w={116}>Benjamin Kramskoi</Fit></Menu>
        </HeaderRow>
      </Header>
      <Tools />

      <Workspace>
        <DataPanel />
        <CardColumn />
        <Sheet>
          <Shelf>
            <ShelfName>
              <svg width="13" height="12" viewBox="0 0 13 12" fill="#555"><path d="M1 0h2v2H1zM5.500 0h2v2h-2zM10 0h2v2h-2zM1 3.500h2V12H1zM5.500 3.500h2V12h-2zM10 3.500h2V12h-2z" /></svg>
              <Fit w={50}>Columns</Fit>
            </ShelfName>
            <Pill $w={150}><Fit w={21}>Age</Fit></Pill>
          </Shelf>
          <Shelf>
            <ShelfName>
              <svg width="13" height="12" viewBox="0 0 13 12" fill="#555"><path d="M0 1h2v2H0zM0 5h2v2H0zM0 9h2v2H0zM3.500 1H12v2H3.500zM3.500 5H12v2H3.500zM3.500 9H12v2H3.500z" /></svg>
              <Fit w={30}>Rows</Fit>
            </ShelfName>
            <Pill $w={150}><Fit w={99}>AVG(tripduration)</Fit></Pill>
          </Shelf>
          <View>
            <ViewTitle>
              <Fit w={256}>AverageTripDurationbyAge</Fit>
              <Fit w={912}>It looks like the age where people are biking the most are in their early twenties, early fifties, and</Fit>
              <Fit w={933}>early seventies. This makes sense as people are biking when they are young, when they are starting</Fit>
              <Fit w={569}>to get worried about their health, and when they are retired.</Fit>
            </ViewTitle>
            <Chart />
          </View>
        </Sheet>
      </Workspace>

      <SheetTabs>
        {tabs.map(([name, w, tw, icon]) => (
          <SheetTab key={name} $w={w} $active={name.startsWith("Average")}>
            {icon}
            <Fit w={tw}>{name}</Fit>
          </SheetTab>
        ))}
        <SheetTab $w={32} $add><SheetAdd /></SheetTab>
        <SheetTab $w={32} $add><GridIcon add /></SheetTab>
        <SheetTab $w={32} $add><Book add /></SheetTab>
      </SheetTabs>
      <Status>
        <Fit w={43}>61 marks</Fit>
        <Fit w={83}>1 row by 1 column</Fit>
        <Fit w={159}>SUM of AVG(tripduration): 43,373</Fit>
      </Status>

      <Taskbar>
        <Start>
          <svg width="16" height="16" fill="#fff"><path d="M0 2.300 7 1.300v6.200H0zM8 1.200 16 0v7.500H8zM0 8.500h7v6.200l-7-1zM8 8.500h8V16l-8-1.200z" /></svg>
        </Start>
        <TaskSearch>
          <svg width="17" height="17" fill="none" stroke="#222" strokeWidth="1.400"><circle cx="10.500" cy="6.500" r="5.500" /><path d="M6.500 10.500.8 16.200" /></svg>
          <Fit w={128}>Type here to search</Fit>
        </TaskSearch>
        <TaskItem $w={48}><svg width="18" height="18" fill="none" stroke="#fff" strokeWidth="2"><circle cx="9" cy="9" r="7" /></svg></TaskItem>
        <TaskItem $w={48}>
          <svg width="18" height="16" fill="none" stroke="#fff"><path d="M1.500 1v2.500h10V1M1.500 15v-2.500h10V15M1.500 5.500h10v5h-10zM15.500 1v14" /><path d="M14 5h3v3h-3z" fill="#fff" stroke="none" /></svg>
        </TaskItem>
        <TaskItem $w={18}><svg width="5" height="16" stroke="#56656d"><path d="M1.500 0v16M4 0v16" /></svg></TaskItem>
        <TaskItem $w={54}><Spark /></TaskItem>
        <TaskItem $open><Edge /></TaskItem>
        <TaskItem><MailIcon /></TaskItem>
        <TaskItem><FaDropbox size={24} /></TaskItem>
        <TaskItem><Store /></TaskItem>
        <TaskItem $open><Explorer /></TaskItem>
        <TaskItem $open $active $w={47}><Chrome /></TaskItem>
        <TaskItem $open $w={51}><Office letter="W" colors={["#41a5ee", "#2b7cd3", "#185abd", "#103f91", "#185abd"]} /></TaskItem>
        <TaskItem $open><Office letter="X" colors={["#2fb878", "#21a366", "#107c41", "#185c37", "#107c41"]} /></TaskItem>
        <TaskItem $open><TableauIcon /></TaskItem>
        <TaskItem $open><Slack /></TaskItem>
        <TaskItem $open><Terminal /></TaskItem>
        <Tray>
          <svg width="28" height="26" viewBox="0 0 28 26">
            <circle cx="12" cy="12" r="11" fill="#fff" /><circle cx="12" cy="12" r="9.500" fill="#168fd8" />
            <HelpText x="12" y="18">?</HelpText>
            <circle cx="19" cy="17" r="5" fill="#e81123" /><path d="M19 13.500v4.500M19 19v1.500" stroke="#fff" strokeWidth="1.500" />
          </svg>
          <svg width="30" height="12"><path d="m11 9 5.500-6L22 9" fill="none" stroke="#fff" strokeWidth="1.400" /></svg>
          <svg width="36" height="18" fill="none" stroke="#c8ced4"><path d="M15 14a9 9 0 0 1 9-9M17.500 14.500a6.500 6.500 0 0 1 7-6.500M20 15a4 4 0 0 1 4.500-4M12 13A13 13 0 0 1 24 2" /><circle cx="23.500" cy="14" r="1.200" fill="#fff" /></svg>
          <Clock><Fit w={42}>2:46 PM</Fit><Fit w={52}>2/13/2021</Fit></Clock>
          <svg width="34" height="32" viewBox="0 0 34 32">
            <path d="M5 5h16v12h-6l-3 4v-4H5z" fill="#fff" /><path d="M8 8.500h10M8 11.500h10M8 14.500h6" stroke="#1a2a42" />
            <circle cx="20" cy="20" r="8.500" fill="#4a5360" stroke="#1a2a42" />
            <BadgeText x="20" y="24">19</BadgeText>
          </svg>
          <PeekEdge />
        </Tray>
      </Taskbar>
    </Screen>
  );
}
